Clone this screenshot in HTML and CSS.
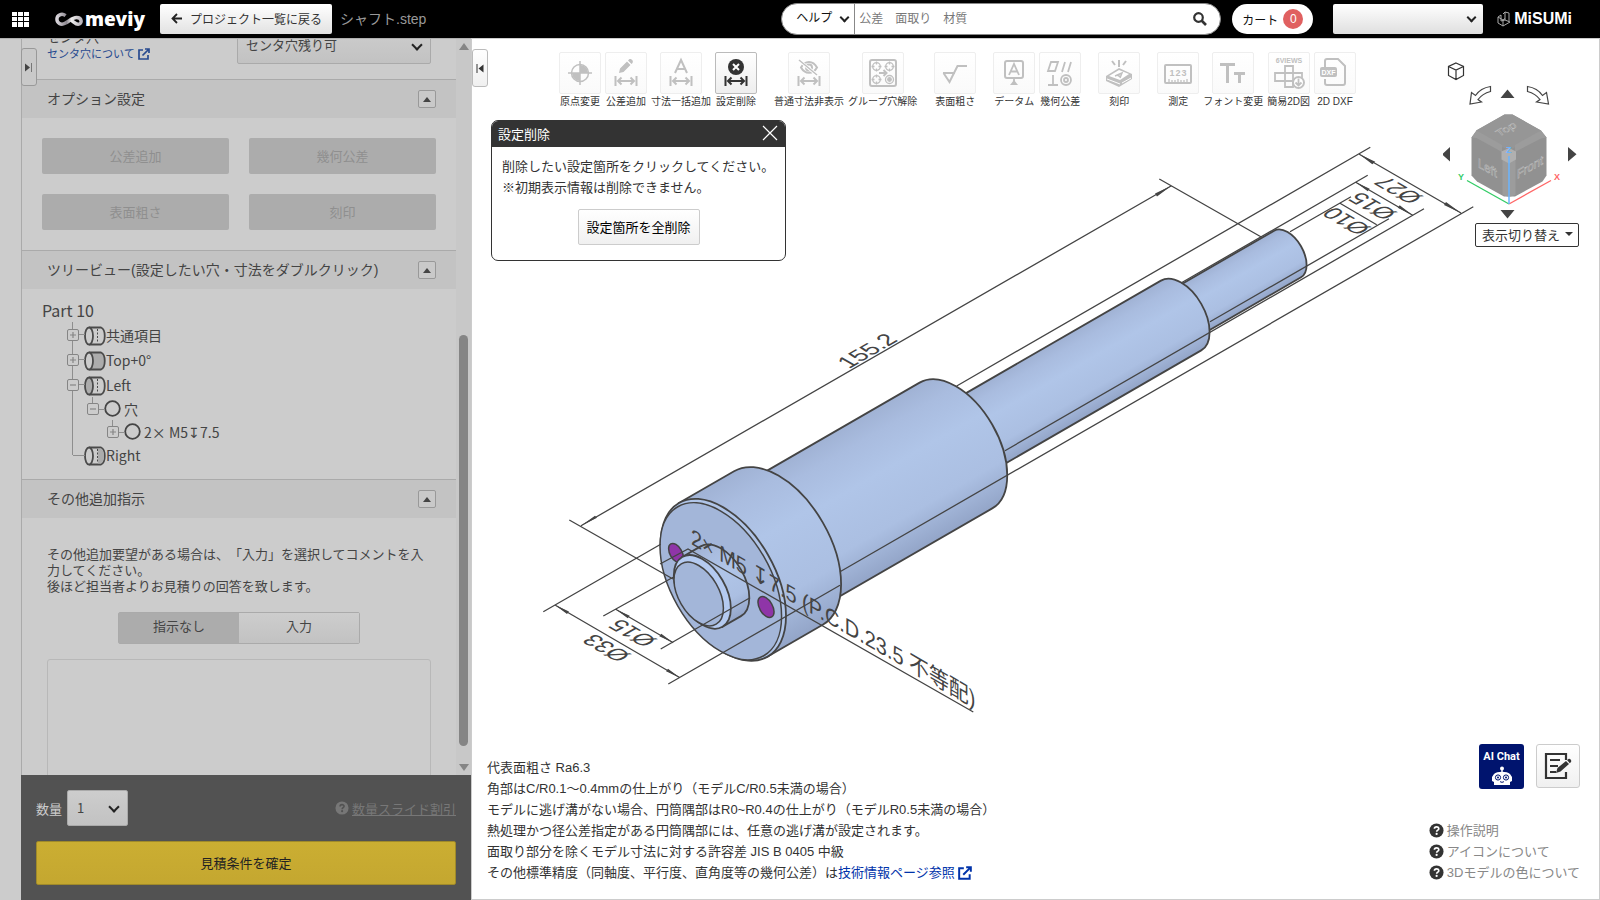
FILE: index.html
```html
<!DOCTYPE html>
<html lang="ja">
<head>
<meta charset="UTF-8">
<meta name="viewport" content="width=device-width, initial-scale=1.0">
<title>meviy</title>
<link rel="stylesheet" href="styles.css">
</head>
<body>

<!-- shared icons -->
<svg class="sprite" width="0" height="0">
    <symbol id="dim" viewBox="0 0 24 12">
        <path d="M1.500 1v10M22.500 1v10M4 6h16M7.500 2.500L4 6l3.500 3.500M16.500 2.500L20 6l-3.500 3.500" fill="none" stroke="currentColor" stroke-width="2"/>
    </symbol>
    <symbol id="external" viewBox="0 0 12 12">
        <path d="M5 2H1v9h9V7M7 1h4v4M11 1L4.500 7.500" fill="none" stroke="currentColor" stroke-width="1.700"/>
    </symbol>
    <symbol id="question" viewBox="0 0 16 16">
        <circle cx="8" cy="8" r="7.500" fill="currentColor"/>
        <path d="M5.800 6.200c0-2.800 4.600-2.700 4.600-.2 0 1.700-2.200 1.600-2.200 3.300" fill="none" stroke="var(--mark, #fff)" stroke-width="1.800"/>
        <circle cx="8.100" cy="11.600" r="1.200" fill="var(--mark, #fff)"/>
    </symbol>
    <symbol id="plus" viewBox="0 0 12 12">
        <rect x=".5" y=".5" width="11" height="11" rx="1.500" fill="#ccc" stroke="#858585"/>
        <path d="M3 6h6M6 3v6" stroke="#858585" stroke-width="1.200"/>
    </symbol>
    <symbol id="minus" viewBox="0 0 12 12">
        <rect x=".5" y=".5" width="11" height="11" rx="1.500" fill="#ccc" stroke="#858585"/>
        <path d="M3 6h6" stroke="#858585" stroke-width="1.200"/>
    </symbol>
    <symbol id="cylinder" viewBox="0 0 22 22">
        <path d="M5 2.500h12c5 2 5 15 0 17H5" fill="var(--body, none)" stroke="#4a4a4a" stroke-width="1.800"/>
        <path d="M14 3.500h3c4 2 4 13 0 15h-3z" fill="var(--right, none)"/>
        <ellipse cx="5" cy="11" rx="4" ry="8.500" fill="var(--left, #ccc)" stroke="#4a4a4a" stroke-width="1.800"/>
        <path d="M13.500 4v14" stroke="var(--dash, #4a4a4a)" stroke-dasharray="2 1.500"/>
    </symbol>
    <symbol id="hole" viewBox="0 0 17 17">
        <circle cx="8.500" cy="8.500" r="7.300" fill="none" stroke="#444" stroke-width="1.800"/>
    </symbol>
</svg>

<header class="header">
    <button class="apps" aria-label="メニュー">
        <svg width="17" height="15" viewBox="0 0 17 15"><path d="M0 0h5v4H0zM6 0h5v4H6zM12 0h5v4h-5zM0 5h5v4H0zM6 5h5v4H6zM12 5h5v4h-5zM0 10h5v5H0zM6 10h5v5H6zM12 10h5v5h-5z" fill="#fff"/></svg>
    </button>
    <a class="logo" href="#">
        <svg width="29" height="15" viewBox="0 0 29 15">
            <defs><linearGradient id="silver" x1="0" x2="1"><stop offset="0" stop-color="#d8d4da"/><stop offset=".4" stop-color="#8d8890"/><stop offset=".6" stop-color="#eee"/><stop offset="1" stop-color="#bbb6bd"/></linearGradient></defs>
            <path d="M11 3.500C7 .5 2 3 2 7s4 7 8.500 4.500C15 9 18 5.500 22.500 5.500c6 0 6 7 1.500 7-3 0-4.500-3-8.500-5" fill="none" stroke="url(#silver)" stroke-width="3.600"/>
        </svg>
        <span>meviy</span>
    </a>
    <button class="back">
        <svg width="11" height="11" viewBox="0 0 11 11"><path d="M11 5.500H1.500M6 1L1.500 5.500 6 10" fill="none" stroke="#222" stroke-width="1.800"/></svg>
        プロジェクト一覧に戻る
    </button>
    <span class="file-name">シャフト.step</span>

    <form class="search">
        <span class="picker help-picker">
            <select aria-label="検索対象"><option>ヘルプ</option></select>
        </span>
        <input type="text" placeholder="公差　面取り　材質" aria-label="検索">
        <button type="button" aria-label="検索する">
            <svg width="14" height="14" viewBox="0 0 14 14"><circle cx="5.500" cy="5.500" r="4.300" fill="none" stroke="#333" stroke-width="2.200"/><path d="M8.500 8.500l4.500 4.500" stroke="#333" stroke-width="2.600"/></svg>
        </button>
    </form>
    <button class="cart">カート<span class="count">0</span></button>
    <span class="picker account">
        <select aria-label="アカウント"><option></option></select>
    </span>
    <a class="misumi" href="#">
        <svg width="14" height="17" viewBox="0 0 14 17"><path d="M1 6l3-2v6l4-1 5 2-7 4-5-3zM1 6l5 3v6M6 9l2-1.500M8 1l4 1v8M8 1v8M8 1L6 3" fill="none" stroke="#aaa"/></svg>
        <span>MiSUMi</span>
    </a>
</header>

<div class="page">
    <aside class="sidebar">
        <div class="settings">
            <div class="panel">
                <div class="field">
                    <div class="field-label">
                        <label for="center-hole">センタ穴</label>
                        <a href="#">センタ穴について <svg width="12" height="12"><use href="#external"/></svg></a>
                    </div>
                    <span class="picker">
                        <select id="center-hole"><option>センタ穴残り可</option></select>
                    </span>
                </div>

                <section>
                    <h2>オプション設定 <button class="collapse" aria-label="閉じる"></button></h2>
                    <div class="options">
                        <button disabled>公差追加</button>
                        <button disabled>幾何公差</button>
                        <button disabled>表面粗さ</button>
                        <button disabled>刻印</button>
                    </div>
                </section>

                <section>
                    <h2>ツリービュー(設定したい穴・寸法をダブルクリック) <button class="collapse" aria-label="閉じる"></button></h2>
                    <div class="tree">
                        <p>Part 10</p>
                        <ul>
                            <li><div class="node"><svg class="toggle"><use href="#plus"/></svg><svg class="shape"><use href="#cylinder"/></svg>共通項目</div></li>
                            <li><div class="node"><svg class="toggle"><use href="#plus"/></svg><svg class="shape side"><use href="#cylinder"/></svg>Top+0°</div></li>
                            <li>
                                <div class="node"><svg class="toggle"><use href="#minus"/></svg><svg class="shape left"><use href="#cylinder"/></svg>Left</div>
                                <ul>
                                    <li>
                                        <div class="node"><svg class="toggle"><use href="#minus"/></svg><svg class="ring"><use href="#hole"/></svg>穴</div>
                                        <ul>
                                            <li><div class="node"><svg class="toggle"><use href="#plus"/></svg><svg class="ring"><use href="#hole"/></svg>2× M5↧7.5</div></li>
                                        </ul>
                                    </li>
                                </ul>
                            </li>
                            <li><div class="node"><span class="toggle"></span><svg class="shape right"><use href="#cylinder"/></svg>Right</div></li>
                        </ul>
                    </div>
                </section>

                <section>
                    <h2>その他追加指示 <button class="collapse" aria-label="閉じる"></button></h2>
                    <div class="request">
                        <p>その他追加要望がある場合は、「入力」を選択してコメントを入力してください。<br>後ほど担当者よりお見積りの回答を致します。</p>
                        <div class="switch">
                            <button class="on">指示なし</button>
                            <button>入力</button>
                        </div>
                        <textarea aria-label="コメント"></textarea>
                    </div>
                </section>
            </div>
            <div class="scrollbar">
                <i class="up"></i>
                <div class="track"><div class="thumb"></div></div>
                <i class="down"></i>
            </div>
            <button class="tab tab-settings" aria-label="開く">
                <svg width="8" height="9" viewBox="0 0 8 9"><path d="M0 .5l5 4-5 4z" fill="#444"/><path d="M6.500 0v9" stroke="#777"/></svg>
            </button>
        </div>

        <div class="order">
            <div class="order-row">
                <label for="quantity">数量</label>
                <span class="picker">
                    <select id="quantity"><option>1</option></select>
                </span>
                <a href="#"><svg width="14" height="14"><use href="#question"/></svg><span>数量スライド割引</span></a>
            </div>
            <button class="confirm">見積条件を確定</button>
        </div>
    </aside>

    <main class="viewer">
        <svg class="model" viewBox="472 39 1127 860">
            <defs>
                <linearGradient id="metal" x1="0" y1="0" x2="0" y2="1">
                    <stop offset="0" stop-color="#a0b2d4"/>
                    <stop offset=".15" stop-color="#a9bcdf"/>
                    <stop offset=".4" stop-color="#b0c5e8"/>
                    <stop offset=".75" stop-color="#abbfe2"/>
                    <stop offset="1" stop-color="#93a5c8"/>
                </linearGradient>
            </defs>
            <!-- shaft, drawn along its own axis from the front boss to the far end -->
            <g transform="translate(698.7 594) rotate(-30)" stroke="#444" stroke-width="1.800">
                <g fill="url(#metal)">
                    <path d="M557-26.900H680A15.500 26.900 0 0 1 680 26.900H557z"/>
                    <path d="M297-40.300H557A23.300 40.300 0 0 1 557 40.300H297z"/>
                    <path d="M92-72.600H297A41.900 72.600 0 0 1 297 72.600H92z"/>
                    <path d="M28.400-88.700H92A51.200 88.700 0 0 1 92 88.700H28.400z"/>
                </g>
                <ellipse cx="28.400" rx="51.200" ry="88.700" fill="#b0c5e8"/>
                <ellipse cx="25.500" rx="49.600" ry="86" fill="#a3b6d9" stroke-width="1.500"/>
            </g>
            <g fill="#8f35a8" stroke="#444" stroke-width="1.500">
                <ellipse cx="676" cy="553" rx="6" ry="10.500" transform="rotate(-30 676 553)"/>
                <ellipse cx="766" cy="607" rx="6.500" ry="11.500" transform="rotate(-30 766 607)"/>
            </g>
            <g transform="translate(698.7 594) rotate(-30)" stroke="#444" stroke-width="1.800">
                <path d="M4.200-40.300H25.500A23.300 40.300 0 0 1 25.500 40.300H4.200z" fill="url(#metal)"/>
                <ellipse cx="4.200" rx="23.300" ry="40.300" fill="#b4caf0"/>
                <ellipse rx="20.200" ry="34.900" fill="#a3b6d9" stroke-width="1.500"/>
            </g>

            <!-- dimension lines -->
            <path class="dims" d="M581 525.700L1171 186M569.300 520L673 579M1159.300 179L1261.700 237.300
                M1359.300 154.300L1461 213M1370.300 147.300L956.700 386M1473.300 206.700L840 571.700
                M1355.700 182.300L1412.700 215.300M1367.700 175.300L1181 283M1424 208.700L1005 450.700
                M1340 203.300L1376.700 224.700M1351 196.700L1290 231.700M1389 218.700L1210 321.700
                M555 605L680 677.700M543.300 611.700L660.700 544.300M668.300 684L840 585.300
                M615.700 609.300L673.300 642.700M603.300 616L674 576.700M660.700 649L750 597.700
                M660 564L688 549L973.300 712"/>
            <path class="arrows" d="M581 525.700l14-10 2 2zM1171 186l-16 7.500 2 3zM1359.300 154.300l13 10 3-2.500zM1461 213l-15-11-2 3zM1355.700 182.300l12 9 2-2.500zM1412.700 215.300l-13-10-2 2.500zM555 605l12 9 2-2.500zM680 677.700l-12-9-2 2.500zM615.700 609.300l12 9 2-2.500zM673.300 642.700l-12-9-2 2.500z"/>
            <g class="dim-text">
                <text transform="matrix(.866 -.5 .866 .5 849 369)">155.2</text>
                <text transform="matrix(-.866 -.5 .866 -.5 1424 197)">Ø27</text>
                <text transform="matrix(-.866 -.5 .866 -.5 1398 213)">Ø15</text>
                <text transform="matrix(-.866 -.5 .866 -.5 1372 228)">Ø10</text>
                <text transform="matrix(-.866 -.5 .866 -.5 658 640)">Ø15</text>
                <text transform="matrix(-.866 -.5 .866 -.5 632 655)">Ø33</text>
                <text transform="matrix(.866 .5 0 1 691 544)">2× M5 ↧7.5 (P.C.D.23.5 不等配)</text>
            </g>
        </svg>

        <button class="tab" aria-label="閉じる">
            <svg width="8" height="9" viewBox="0 0 8 9"><path d="M7.500 .5l-5 4 5 4z" fill="#333"/><path d="M1 0v9" stroke="#333"/></svg>
        </button>

        <div class="viewer-top">
            <div class="toolbar">
                <div class="tools">
                    <button class="tool"><span class="icon"><svg viewBox="0 0 40 40"><circle cx="20" cy="20" r="8.500" fill="none" stroke="currentColor" stroke-width="1.500"/><path d="M20 20v-8a8 8 0 0 1 8 8zM20 20v8a8 8 0 0 1-8-8z" fill="currentColor"/><path d="M20 8v24M8 20h24" stroke="currentColor" stroke-width="1.500"/></svg></span>原点変更</button>
                    <button class="tool"><span class="icon"><svg viewBox="0 0 40 40"><use href="#dim" x="8" y="22" width="24" height="12"/><path d="M13 20l1-4.500 7-7 3.500 3.500-7 7zM22 7.500l1-1c2-1.500 5 1.500 3.500 3.500l-1 1z" fill="currentColor"/></svg></span>公差追加</button>
                    <button class="tool"><span class="icon"><svg viewBox="0 0 40 40"><use href="#dim" x="8" y="22" width="24" height="12"/><path d="M14 20l6-13 6 13M16 16h8" fill="none" stroke="currentColor" stroke-width="2"/></svg></span>寸法一括追加</button>
                    <button class="tool active"><span class="icon"><svg viewBox="0 0 40 40"><use href="#dim" x="8" y="22" width="24" height="12"/><circle cx="20" cy="14" r="8" fill="currentColor"/><path d="M17 11l6 6M23 11l-6 6" stroke="#fff" stroke-width="2"/></svg></span>設定削除</button>
                </div>
                <div class="tools">
                    <button class="tool"><span class="icon"><svg viewBox="0 0 40 40"><use href="#dim" x="8" y="22" width="24" height="12"/><path d="M12 14.500c4-7.500 12-7.500 16 0-4 7-12 7-16 0z" fill="none" stroke="currentColor" stroke-width="2"/><circle cx="20" cy="14.500" r="3" fill="none" stroke="currentColor" stroke-width="2"/><path d="M11 8l17 14" stroke="#fff" stroke-width="3"/><path d="M10 7l18 15" stroke="currentColor" stroke-width="1.500"/></svg></span>普通寸法非表示</button>
                    <button class="tool"><span class="icon"><svg viewBox="0 0 40 40" fill="none" stroke="currentColor" stroke-width="1.300"><rect x="7" y="7" width="26" height="26" rx="2" stroke-width="2"/><circle cx="13.500" cy="13.500" r="3.800"/><circle cx="26.500" cy="13.500" r="3.800"/><circle cx="13.500" cy="26.500" r="3.800"/><circle cx="26.500" cy="26.500" r="4"/><circle cx="26.500" cy="26.500" r="1.800" fill="currentColor"/><path d="M13.500 8.500v3M13.500 15.500v3M8.500 13.500h3M15.500 13.500h3M26.500 8.500v3M26.500 15.500v3M21.500 13.500h3M28.500 13.500h3M13.500 21.500v3M13.500 28.500v3M8.500 26.500h3M15.500 26.500h3"/><path d="M16 20h7M20.500 17l3 3-3 3" stroke-width="2"/></svg></span>グループ穴解除</button>
                </div>
                <div class="tools">
                    <button class="tool"><span class="icon"><svg viewBox="0 0 40 40"><path d="M8 20h12M8.500 20l6 9 8-16h9.500" fill="none" stroke="currentColor" stroke-width="2"/></svg></span>表面粗さ</button>
                </div>
                <div class="tools">
                    <button class="tool"><span class="icon"><svg viewBox="0 0 40 40"><rect x="11" y="8" width="18" height="17" rx="2" fill="none" stroke="currentColor" stroke-width="2"/><path d="M15 22l5-11 5 11M16.500 18.500h7M20 25v5" fill="none" stroke="currentColor" stroke-width="1.800"/><path d="M20 27l4 5h-8z" fill="currentColor"/></svg></span>データム</button>
                    <button class="tool"><span class="icon"><svg viewBox="0 0 40 40" fill="none" stroke="currentColor" stroke-width="1.800"><path d="M11 9h7l-3 9H8zM25 9l-3 10M31 9l-3 10M8 32h10M13 22v10"/><circle cx="26" cy="27" r="5"/><circle cx="26" cy="27" r="2"/></svg></span>幾何公差</button>
                </div>
                <div class="tools">
                    <button class="tool"><span class="icon"><svg viewBox="0 0 40 40"><path d="M7 23l13-8 13 6v5l-13 8-13-6z" fill="currentColor"/><path d="M10 23l10-6 10 4-9 6z" fill="#fff"/><path d="M16 23l7-3-2 5M18 22l4 2" fill="none" stroke="currentColor" stroke-width="1.500"/><path d="M20 7v7M13 8l3 4M27 8l-3 4" stroke="currentColor" stroke-width="2"/><path d="M8 26l13 5M23 30l9-5" stroke="#fff"/></svg></span>刻印</button>
                </div>
                <div class="tools">
                    <button class="tool"><span class="icon"><svg viewBox="0 0 40 40"><rect x="7" y="12" width="26" height="18" rx="1" fill="none" stroke="currentColor" stroke-width="2"/><path d="M11 30v-4M14 30v-3M17 30v-3M20 30v-4M23 30v-3M26 30v-3M29 30v-4" stroke="currentColor" stroke-width="1.300"/><g font-size="9" font-weight="bold" text-anchor="middle" fill="currentColor"><text x="14" y="23">1</text><text x="20" y="23">2</text><text x="26" y="23">3</text></g></svg></span>測定</button>
                    <button class="tool"><span class="icon"><svg viewBox="0 0 40 40"><path d="M7 11.500h15M14.500 11.500V30M21 20.500h11M26.500 20.500V30" stroke="currentColor" stroke-width="3"/></svg></span>フォント変更</button>
                    <button class="tool"><span class="icon"><svg viewBox="0 0 40 40"><text x="20" y="10" font-size="7" font-weight="bold" text-anchor="middle" fill="currentColor">6VIEWS</text><path d="M16 13h8v7h9v8h-9v6h-8v-6H6v-8h10zM16 20h8v8h-8z" fill="none" stroke="currentColor" stroke-width="1.800"/><circle cx="29.500" cy="29.500" r="5.500" fill="#fff" stroke="currentColor" stroke-width="2"/><path d="M29.500 25.500v7M26.500 29.500l3 3 3-3" fill="none" stroke="currentColor" stroke-width="1.800"/></svg></span>簡易2D図</button>
                    <button class="tool"><span class="icon"><svg viewBox="0 0 40 40"><path d="M10 14V8q0-2 2-2h11l7 7v17q0 2-2 2H12q-2 0-2-2v-4" fill="none" stroke="currentColor" stroke-width="2"/><rect x="5" y="14" width="17" height="10" rx="2" fill="currentColor"/><text x="13.500" y="21.500" font-size="7" font-weight="bold" text-anchor="middle" fill="#fff">DXF</text></svg></span>2D DXF</button>
                </div>
            </div>

            <div class="view-nav">
                <svg viewBox="1443 52 156 168" width="156" height="168">
                    <path d="M1456 63l7.500 3.500v9L1456 79.500l-7.500-4v-9zM1448.500 66.500l7.500 3.500 7.500-3.500M1456 70v9.500" fill="none" stroke="#333" stroke-width="1.200"/>
                    <g fill="#444">
                        <path d="M1500.500 98l7-8.500 7 8.500zM1500.500 210h14l-7 8.500zM1450 147v14.500l-8-7.200zM1568 147v14.500l8.500-7.200z"/>
                    </g>
                    <path d="M1490.500 86.500c-7 1-12 4.500-15 9l-4-3-1.500 11.500 11.500-2-3.500-2.500c3-4 7-6.500 12.500-8z" fill="#fff" stroke="#444" stroke-width="1.200"/>
                    <path d="M1527.500 86.500c7 1 12 4.500 15 9l4-3 2 11.500-12-2 3.500-2.500c-3-4-7-6.500-12.500-8z" fill="#fff" stroke="#444" stroke-width="1.200"/>
                    <path d="M1504.500 114.500h8l28.500 16 5.500 7v38l-4 6-27.500 15h-11l-27-15-5.500-6v-38l5-7z" fill="#919191"/>
                    <path d="M1504.500 114.500h8l28.500 16-25 16.500-7 3-7-3-26-16.500z" fill="#969696"/>
                    <path d="M1476.500 130.500l25.500 14.500v7l-25.500-14-5-.5zM1541 130.500l-26 14.500v7l26-13.500 5.500-1zM1502.500 160h13v35l-5 1.500h-3l-5-1.500z" fill="#9c9c9c"/>
                    <path d="M1509 148l7 3.500v8l-7 4-7.500-4v-8z" fill="#b0b0b0"/>
                    <g class="cube-text">
                        <text transform="matrix(.866 -.5 .5 .6 1499 137)">Top</text>
                        <text transform="matrix(.866 .5 0 1 1478 167)">Left</text>
                        <text transform="matrix(.866 -.5 0 1 1517 179)">Front</text>
                    </g>
                    <path d="M1509 204l-42-23.500" stroke="#3c6" stroke-width="1.300"/>
                    <path d="M1509 204l42-23.500" stroke="#f66" stroke-width="1.300"/>
                    <path d="M1509 204v-48" stroke="#6ab4ff" stroke-width="1.500"/>
                    <g class="axis-text">
                        <text x="1458" y="180" fill="#3c6">Y</text>
                        <text x="1554" y="180" fill="#f66">X</text>
                        <text x="1506" y="153" fill="#6ab4ff">Z</text>
                    </g>
                </svg>
                <button class="display-menu">表示切り替え</button>
            </div>
        </div>

        <div class="dialog" role="dialog" aria-label="設定削除">
            <div class="dialog-title">設定削除
                <button class="close" aria-label="閉じる"><svg width="16" height="16" viewBox="0 0 16 16"><path d="M1 1l14 14M15 1L1 15" stroke="#fff" stroke-width="1.200"/></svg></button>
            </div>
            <p>削除したい設定箇所をクリックしてください。<br>※初期表示情報は削除できません。</p>
            <button class="delete-all">設定箇所を全削除</button>
        </div>

        <div class="viewer-bottom">
            <p class="notes">
                代表面粗さ Ra6.3<br>
                角部はC/R0.1～0.4mmの仕上がり（モデルC/R0.5未満の場合）<br>
                モデルに逃げ溝がない場合、円筒隅部はR0~R0.4の仕上がり（モデルR0.5未満の場合）<br>
                熱処理かつ径公差指定がある円筒隅部には、任意の逃げ溝が設定されます。<br>
                面取り部分を除くモデル寸法に対する許容差 JIS B 0405 中級<br>
                その他標準精度（同軸度、平行度、直角度等の幾何公差）は<a href="#">技術情報ページ参照 <svg width="14" height="14"><use href="#external"/></svg></a>
            </p>
            <div class="support">
                <div class="support-buttons">
                    <button class="ai-chat">AI Chat
                        <svg width="22" height="20" viewBox="0 0 22 20"><circle cx="11" cy="2.500" r="2" fill="#fff"/><path d="M10.300 4h1.400v3h-1.400z" fill="#fff"/><path d="M3 8c3-3 13-3 16 0l2 3v4l-2 1v3H3v-3l-2-1v-4z" fill="#fff"/><circle cx="7" cy="11.500" r="2.600" fill="#fff" stroke="#00146e"/><circle cx="15" cy="11.500" r="2.600" fill="#fff" stroke="#00146e"/><circle cx="7" cy="11.500" r="1" fill="#00146e"/><circle cx="15" cy="11.500" r="1" fill="#00146e"/><path d="M9 15.500c1 1 3 1 4 0" fill="none" stroke="#00146e"/></svg>
                    </button>
                    <button class="memo" aria-label="メモ">
                        <svg width="28" height="28" viewBox="0 0 28 28"><path d="M22 8V2H2v24h20v-6M6 8h10M6 14h8M6 20h6" fill="none" stroke="#333" stroke-width="2.200"/><path d="M12 21l1.500-5L22 9l3 3-8.500 7.500zM23 8l1.500-1c1.500-1 3.500 1.500 2.500 3l-1.200 1.200z" fill="#333"/></svg>
                    </button>
                </div>
                <a href="#"><svg width="15" height="15"><use href="#question"/></svg>操作説明</a>
                <a href="#"><svg width="15" height="15"><use href="#question"/></svg>アイコンについて</a>
                <a href="#"><svg width="15" height="15"><use href="#question"/></svg>3Dモデルの色について</a>
            </div>
        </div>
    </main>
</div>

</body>
</html>
```

FILE: styles.css
```css
* {
    box-sizing: border-box;
}
body {
    display: flex;
    flex-direction: column;
    height: 100vh;
    margin: 0;
    font-family: "Liberation Sans", "Noto Sans CJK JP", sans-serif;
    font-size: 13px;
    color: #333;
    text-spacing-trim: space-all;
}
button, select, input, textarea {
    margin: 0;
    padding: 0;
    font: inherit;
    color: inherit;
}
button {
    cursor: pointer;
}
p, ul, h2 {
    margin: 0;
    padding: 0;
}
a {
    color: inherit;
    text-decoration: none;
}
.sprite {
    position: absolute;
}

/* select with its own chevron */
.picker {
    display: flex;
    position: relative;
}
.picker select {
    width: 100%;
    height: 100%;
    padding-bottom: 2px;
    border: 1px solid #aaa;
    border-radius: 2px;
    appearance: none;
    background: linear-gradient(#cdcdcd, #c2c2c2);
}
.picker::after {
    content: "";
    position: absolute;
    right: 10px;
    top: 50%;
    width: 6px;
    height: 6px;
    margin-top: -5px;
    border: solid #222;
    border-width: 0 2px 2px 0;
    transform: rotate(45deg);
    pointer-events: none;
}

/* header */
.header {
    display: flex;
    align-items: center;
    flex: none;
    height: 38px;
    padding: 0 28px 0 12px;
    background: #000;
}
.apps {
    display: flex;
    border: 0;
    background: none;
}
.logo {
    display: flex;
    align-items: center;
    gap: 2px;
    width: 90px;
    margin-left: 26px;
    font-family: "Open Sans", sans-serif;
    font-size: 19px;
    font-weight: 800;
    line-height: 30px;
    color: #fff;
}
.back {
    display: flex;
    align-items: center;
    gap: 8px;
    height: 30px;
    margin-left: 15px;
    padding: 0 10px 2px 11px;
    border: 0;
    border-radius: 2px;
    background: linear-gradient(#fff, #e2e2e2);
    font-size: 12px;
    white-space: nowrap;
}
.file-name {
    margin-left: 8px;
    font-size: 14px;
    line-height: 20px;
    color: #999;
    white-space: nowrap;
}
.search {
    display: flex;
    align-items: center;
    width: 440px;
    height: 32px;
    margin-left: auto;
    border: 1px solid #888;
    border-radius: 16px;
    background: #fff;
    overflow: hidden;
    font-size: 12px;
}
.help-picker {
    width: 73px;
    height: 100%;
    border-right: 1px solid #888;
}
.help-picker select {
    padding-left: 14px;
    border: 0;
    background: none;
    color: #111;
}
.picker.help-picker::after {
    right: 6px;
    width: 5px;
    height: 5px;
}
.search input {
    flex: 1;
    min-width: 0;
    padding: 0 4px;
    border: 0;
    outline: 0;
}
.search input::placeholder {
    color: #777;
}
.search button {
    display: flex;
    margin-right: 13px;
    border: 0;
    background: none;
}
.cart {
    display: flex;
    align-items: center;
    gap: 5px;
    height: 30px;
    margin-left: 11px;
    padding: 0 10px;
    border: 0;
    border-radius: 15px;
    background: #fff;
    font-size: 12px;
    color: #111;
}
.count {
    width: 20px;
    height: 20px;
    border-radius: 10px;
    background: #e06060;
    line-height: 20px;
    color: #fff;
}
.account {
    width: 150px;
    height: 30px;
    margin: 0 14px 0 20px;
}
.account select {
    border: 0;
    background: linear-gradient(#fff, #dfdfdf);
}
.account::after {
    right: 8px;
    width: 5px;
    height: 5px;
}
.misumi {
    display: flex;
    align-items: center;
    gap: 3px;
    font-size: 16px;
    font-weight: bold;
    color: #fff;
}

.page {
    display: flex;
    flex: 1;
    min-height: 0;
}

/* sidebar */
.sidebar {
    display: flex;
    flex-direction: column;
    width: 471px;
    flex: none;
    border-top: 1px solid #b0b0b0;
    background: #ccc;
    color: #444;
}
.settings {
    display: flex;
    flex: 1;
    min-height: 0;
    position: relative;
    padding-left: 21px;
}
.panel {
    flex: 1;
    min-width: 0;
    border-left: 1px solid #aaa;
    overflow: hidden;
}
.field {
    display: flex;
    justify-content: space-between;
    margin-top: -11px;
    padding: 0 25px 15px;
}
.field-label {
    display: flex;
    flex-direction: column;
    padding-top: 2px;
    line-height: 16px;
}
.field-label a {
    display: flex;
    align-items: center;
    gap: 3px;
    font-size: 11px;
    color: #274a8f;
}
.field .picker {
    width: 194px;
    height: 36px;
}
.field select {
    padding-left: 8px;
}
.panel h2 {
    display: flex;
    align-items: center;
    justify-content: space-between;
    height: 39px;
    padding: 0 20px 0 25px;
    border-top: 1px solid #aaa;
    background: #c3c3c3;
    font-size: 14px;
    font-weight: normal;
    line-height: 18px;
}
.collapse {
    display: flex;
    align-items: center;
    justify-content: center;
    width: 18px;
    height: 18px;
    border: 1px solid #999;
    border-radius: 2px;
    background: #c9c9c9;
}
.collapse::after {
    content: "";
    border: 4px solid transparent;
    border-top: 0;
    border-bottom: 5px solid #444;
}
.options {
    display: grid;
    grid-template-columns: 1fr 1fr;
    gap: 20px;
    padding: 20px;
}
.options button {
    height: 36px;
    padding-bottom: 2px;
    border: 0;
    border-radius: 2px;
    background: #acacac;
    color: #8f8f8f;
}
.tree {
    padding: 9px 20px 13px;
    font-family: "Noto Sans CJK JP", sans-serif;
    font-size: 14px;
}
.tree p {
    font-size: 16px;
    line-height: 24px;
}
.tree ul {
    margin-left: 20px;
    list-style: none;
}
.tree > ul {
    margin-left: 25px;
}
.tree li {
    position: relative;
}
.tree li::before {
    content: "";
    position: absolute;
    left: 5px;
    top: 0;
    bottom: 0;
    border-left: 1px solid #8e8e8e;
}
.tree li:last-child::before {
    bottom: auto;
    height: 12px;
}
.node {
    display: flex;
    align-items: center;
    position: relative;
    height: 25px;
    white-space: pre;
}
.node::before {
    content: "";
    position: absolute;
    left: 6px;
    top: 12px;
    width: 12px;
    border-top: 1px solid #8e8e8e;
}
.tree ul ul .node, .tree li:last-child > .node {
    height: 23px;
}
.toggle {
    position: relative;
    width: 12px;
    height: 12px;
    margin-right: 5px;
}
.shape {
    width: 22px;
    height: 22px;
    margin-top: 3px;
}
.shape.side {
    --body: #acacac;
    --dash: none;
}
.shape.left {
    --left: #acacac;
}
.shape.right {
    --right: #acacac;
}
.ring {
    width: 17px;
    height: 17px;
    margin-right: 3px;
}
.request {
    padding: 29px 25px 0;
    line-height: 16px;
}
.switch {
    display: flex;
    width: 242px;
    height: 32px;
    margin: 17px auto 15px;
    border: 1px solid #aaa;
    border-radius: 2px;
}
.switch button {
    flex: 1;
    padding-bottom: 2px;
    border: 0;
    background: linear-gradient(#cdcdcd, #c2c2c2);
}
.switch .on {
    background: #acacac;
}
.request textarea {
    display: block;
    width: 100%;
    height: 200px;
    border: 1px solid #b8b8b8;
    border-radius: 3px;
    background: none;
    resize: none;
}
.scrollbar {
    display: flex;
    flex-direction: column;
    align-items: center;
    width: 15px;
    padding: 4px 0;
    background: #c8c8c8;
}
.scrollbar i {
    border: 5px solid transparent;
}
.scrollbar .up {
    border-top: 0;
    border-bottom: 7px solid #858585;
}
.scrollbar .down {
    border-bottom: 0;
    border-top: 7px solid #858585;
}
.track {
    display: flex;
    flex-direction: column;
    justify-content: flex-end;
    flex: 1;
    width: 9px;
    padding-bottom: 18px;
}
.thumb {
    height: 59%;
    border-radius: 5px;
    background: #858585;
}
.tab {
    display: flex;
    align-items: center;
    justify-content: center;
    position: absolute;
    left: 0;
    top: 10px;
    width: 16px;
    height: 38px;
    border: 1px solid #bbb;
    border-radius: 3px;
    background: linear-gradient(#fff, #f0f0f0);
}
.tab-settings {
    left: 21px;
    top: 9px;
    border-color: #999;
    background: #c9c9c9;
}
.order {
    margin-left: 21px;
    padding: 15px;
    background: #525252;
}
.order-row {
    display: flex;
    align-items: center;
    gap: 5px;
    margin-bottom: 15px;
    color: #ccc;
}
.order-row .picker {
    width: 61px;
    height: 36px;
    color: #444;
}
.order-row select {
    padding-left: 9px;
    font-family: "Noto Sans CJK JP", sans-serif;
}
.order-row a {
    display: flex;
    align-items: center;
    gap: 3px;
    margin-left: auto;
    color: #777;
    --mark: #525252;
}
.order-row a span {
    text-decoration: underline;
}
.confirm {
    width: 100%;
    height: 44px;
    padding-bottom: 2px;
    border: 1px solid #a08a2a;
    border-radius: 2px;
    background: linear-gradient(#cbae32, #c4a730);
    color: #222;
}

/* viewer */
.viewer {
    display: flex;
    flex-direction: column;
    justify-content: space-between;
    flex: 1;
    min-width: 0;
    position: relative;
    border: 1px solid #ccc;
    background: #fff;
}
.model {
    position: absolute;
    left: 0;
    top: 0;
    width: 100%;
    height: 100%;
}
.dims {
    fill: none;
    stroke: #444;
    stroke-width: 1.3;
}
.arrows {
    fill: #444;
}
.dim-text {
    font-size: 23px;
    fill: #444;
}
.viewer-top, .viewer-bottom {
    display: flex;
    position: relative;
}
.viewer-top {
    padding-top: 13px;
}
.toolbar {
    display: flex;
    justify-content: center;
    gap: 17px;
    flex: 1;
}
.tools {
    display: flex;
    align-items: flex-start;
    gap: 4px;
}
.tool {
    display: flex;
    flex-direction: column;
    align-items: center;
    min-width: 42px;
    border: 0;
    background: none;
    font-size: 10px;
    line-height: 16px;
    white-space: nowrap;
}
.icon {
    display: flex;
    width: 42px;
    height: 42px;
    border: 1px solid #eee;
    border-radius: 2px;
    background: linear-gradient(#fff, #fafafa);
    color: #c0c0c0;
}
.active .icon {
    border-color: #bbb;
    background: linear-gradient(#fff, #eee);
    color: #333;
}
.view-nav {
    display: flex;
    flex-direction: column;
    align-items: flex-end;
    width: 156px;
    padding-right: 20px;
}
.view-nav svg {
    flex: none;
    margin-right: -20px;
}
.cube-text {
    font-size: 13px;
    fill: #8a8a8a;
    stroke: #c4c4c4;
    stroke-width: .5;
}
.axis-text {
    font-size: 9px;
    font-weight: bold;
}
.display-menu {
    display: flex;
    align-items: center;
    justify-content: space-between;
    width: 104px;
    height: 24px;
    margin-top: 3px;
    padding: 0 5px 2px 6px;
    border: 1px solid #333;
    border-radius: 2px;
    background: #fff;
    white-space: nowrap;
}
.display-menu::after {
    content: "";
    border: 4px solid transparent;
    border-top-color: #333;
    border-bottom: 0;
}
.dialog {
    position: absolute;
    left: 19px;
    top: 81px;
    width: 295px;
    padding-bottom: 15px;
    border: 1px solid #333;
    border-radius: 7px;
    background: #fff;
    overflow: hidden;
}
.dialog-title {
    display: flex;
    align-items: center;
    justify-content: space-between;
    height: 26px;
    padding: 0 7px 2px 6px;
    background: #333;
    color: #fff;
}
.close {
    display: flex;
    border: 0;
    background: none;
}
.dialog p {
    padding: 9px 10px 11px;
    line-height: 21px;
}
.delete-all {
    display: block;
    width: 122px;
    height: 36px;
    margin: 0 auto;
    padding-bottom: 2px;
    border: 1px solid #ccc;
    border-radius: 2px;
    background: linear-gradient(#fff, #f0f0f0);
    color: #000;
}
.viewer-bottom {
    align-items: flex-end;
    justify-content: space-between;
    padding: 0 19px 16px 15px;
}
.notes, .support {
    line-height: 21px;
}
.notes a {
    color: #03a;
}
.notes svg {
    vertical-align: -3px;
}
.support-buttons {
    display: flex;
    justify-content: flex-end;
    gap: 12px;
    margin-bottom: 31px;
}
.support a {
    display: flex;
    align-items: center;
    gap: 3px;
    color: #888;
}
.support a svg {
    color: #333;
}
.ai-chat {
    display: flex;
    flex-direction: column;
    align-items: center;
    width: 45px;
    height: 45px;
    padding-top: 4px;
    border: 0;
    border-radius: 3px;
    background: #00146e;
    font-family: Roboto, sans-serif;
    font-size: 11px;
    font-weight: bold;
    line-height: 18px;
    color: #fff;
    white-space: nowrap;
}
.memo {
    display: flex;
    align-items: center;
    justify-content: center;
    width: 44px;
    height: 44px;
    border: 1px solid #ccc;
    border-radius: 3px;
    background: linear-gradient(#fff, #f0f0f0);
}
```
